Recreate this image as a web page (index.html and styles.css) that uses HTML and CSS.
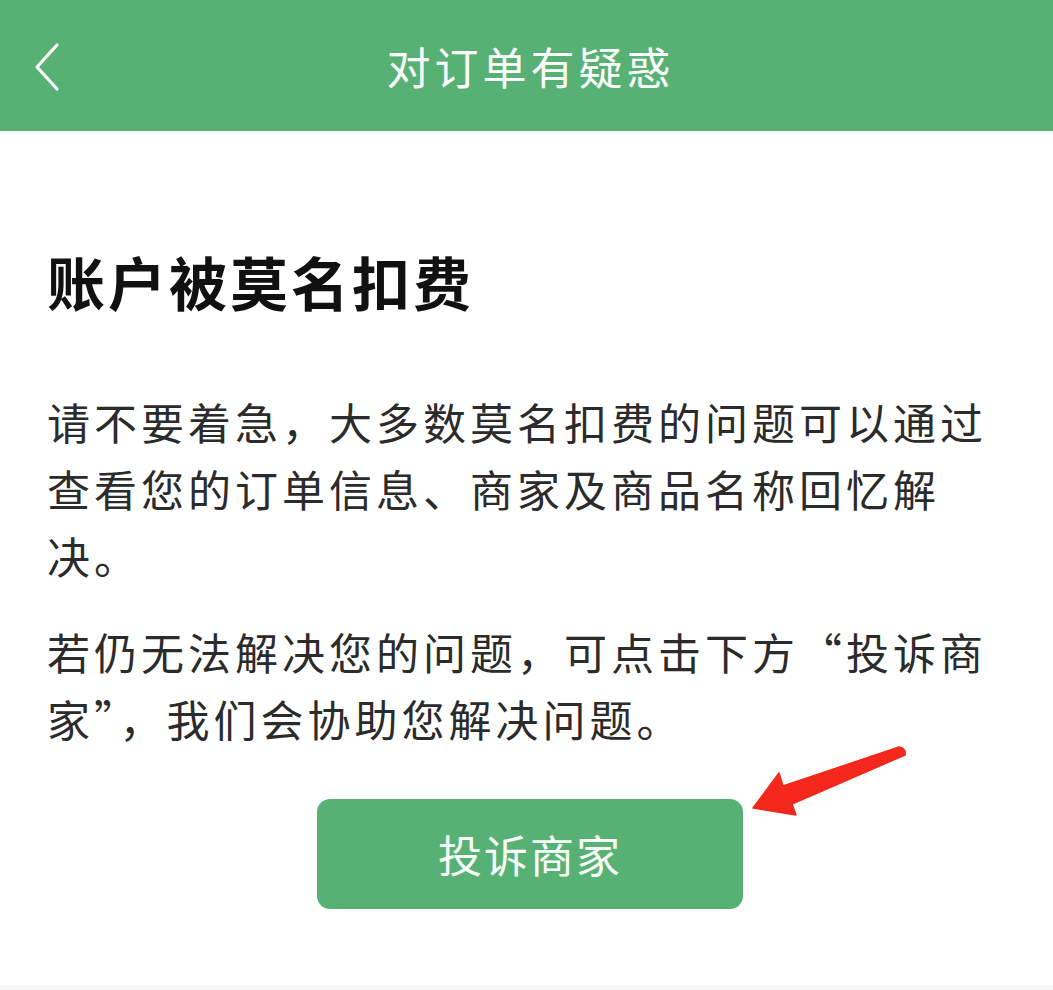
FILE: index.html
```html
<!DOCTYPE html>
<html lang="zh-CN">
  <head>
    <meta charset="UTF-8" />
    <meta name="viewport" content="width=device-width, initial-scale=1.0" />
    <title>对订单有疑惑</title>
    <link rel="stylesheet" href="styles.css">
  </head>
  <body>
    <header class="nav-bar">
      <a class="nav-back" href="#">
        <svg width="30" height="50" viewBox="0 0 30 50">
          <path d="M23 3 L3 25 L23 47" fill="none" stroke="#fff" stroke-width="3.2" stroke-linecap="round" stroke-linejoin="round" />
        </svg>
      </a>
      <h1 class="nav-title">对订单有疑惑</h1>
    </header>

    <main class="content">
      <h2 class="question">账户被莫名扣费</h2>
      <p class="answer">请不要着急，大多数莫名扣费的问题可以通过查看您的订单信息、商家及商品名称回忆解决。</p>
      <p class="answer">若仍无法解决您的问题，可点击下方“投诉商家”，我们会协助您解决问题。</p>
      <div class="actions">
        <button type="button" class="btn-complain">投诉商家</button>
      </div>
    </main>

    <!-- red annotation arrow -->
    <svg class="mark-arrow" width="1053" height="990" viewBox="0 0 1053 990">
      <path d="M753 808 L779 773 L783 786 L899 747 Q906 748 905 755 L792 804 L796 815 Z" fill="#f3271b" stroke="#f3271b" stroke-width="1.5" stroke-linejoin="round" />
    </svg>
  </body>
</html>
```

FILE: styles.css
```css
body {
  margin: 0;
  font-family: "Noto Sans CJK SC", "Noto Sans", sans-serif;
  background: #f6f6f6;
}
.nav-bar {
  position: relative;
  height: 131px;
  background: #58b174;
  display: flex;
  align-items: center;
  justify-content: center;
}
.nav-back {
  position: absolute;
  left: 34px;
  top: 42px;
  display: block;
  line-height: 0;
}
.nav-title {
  margin: 0;
  padding-left: 8px;
  color: #fdfffd;
  font-size: 44px;
  font-weight: 400;
  letter-spacing: 4px;
}
.content {
  background: #fff;
  height: 854px;
  padding: 0 47px;
  overflow: hidden;
}
.question {
  margin: 114px 0 0;
  font-size: 58px;
  line-height: 72px;
  letter-spacing: 3px;
  font-weight: 700;
  color: #111;
}
.answer {
  margin: 0;
  font-size: 43px;
  line-height: 67px;
  letter-spacing: 4px;
  color: #2b2b2b;
}
.question + .answer {
  margin-top: 71px;
}
.answer + .answer {
  margin-top: 29px;
}
.actions {
  display: flex;
  justify-content: center;
  margin-top: 47px;
  padding-left: 7px;
}
.btn-complain {
  width: 426px;
  height: 110px;
  border: none;
  border-radius: 13px;
  background: #58b174;
  color: #f8fff8;
  font-family: inherit;
  font-size: 44px;
  letter-spacing: 2px;
  cursor: pointer;
}
.mark-arrow {
  position: absolute;
  left: 0;
  top: 0;
  pointer-events: none;
}
```
